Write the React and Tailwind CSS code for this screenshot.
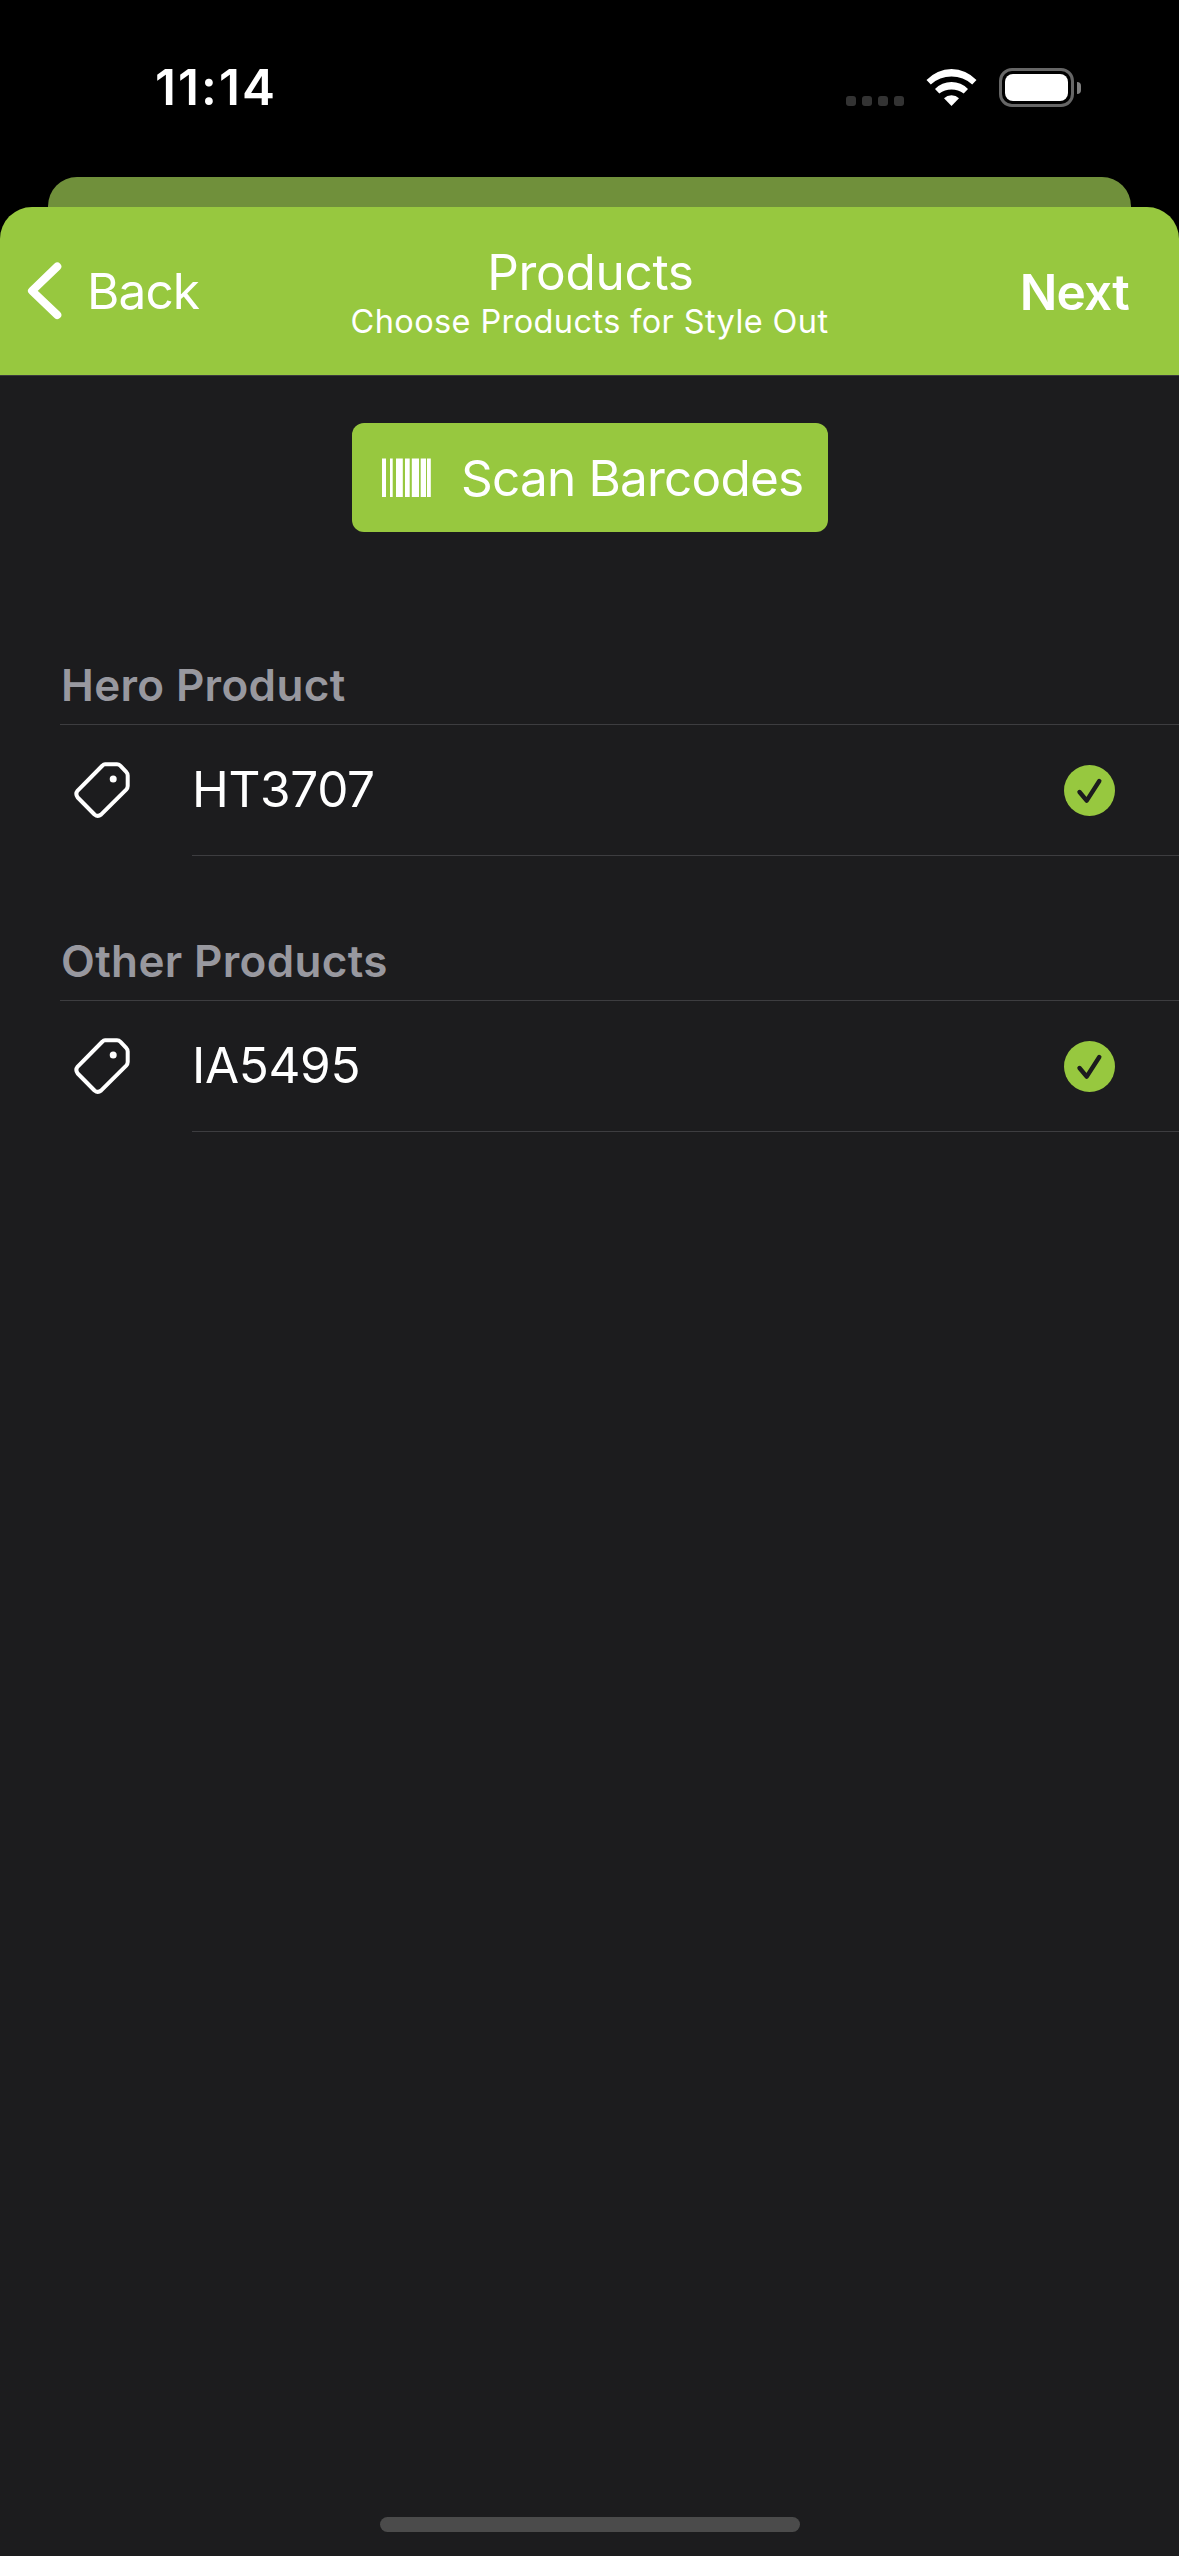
const SECTIONS = [
  { title: "Hero Product", products: ["HT3707"], spacing: "mt-[123px]" },
  { title: "Other Products", products: ["IA5495"], spacing: "mt-[75px]" },
];

// x offset and width of every bar
const BARS = [
  [0, 4],
  [8, 2.7],
  [14, 6.8],
  [23, 4.7],
  [29.8, 7.2],
  [38.7, 5.3],
  [45, 3.8],
];

function WifiIcon() {
  return (
    <svg width="51" height="37" viewBox="0 0 51 37" fill="white">
      <path d="M0.5 11 A34 34 0 0 1 50.5 11 L46.2 15.4 A30.8 30.8 0 0 0 4.8 15.4 Z" />
      <path d="M9 20 A23 23 0 0 1 42 20 L37.7 24.6 A19.8 19.8 0 0 0 13.3 24.6 Z" />
      <path d="M18 29.3 A11 11 0 0 1 33 29.3 L25.5 37 Z" />
    </svg>
  );
}

function BatteryIcon() {
  return (
    <div className="flex items-center gap-[3px]">
      <div className="h-[39px] w-[75px] rounded-[13px] border-3 border-[#666666] p-[3px]">
        <div className="h-full w-full rounded-[8px] bg-white" />
      </div>
      <div className="h-3 w-1 rounded-r-full bg-[#808080]" />
    </div>
  );
}

function StatusBar() {
  return (
    <div className="flex h-[177px] items-center justify-between pr-[98px] pb-[2px] pl-[155px]">
      <span className="text-[49.5px] font-semibold tracking-[2.1px]">11:14</span>
      <div className="flex items-center">
        <div className="mt-[27px] mr-[22px] flex gap-1.5">
          {[0, 1, 2, 3].map((dot) => (
            <span key={dot} className="size-2.5 rounded-[3px] bg-[#333333]" />
          ))}
        </div>
        <WifiIcon />
        <div className="ml-[22px]">
          <BatteryIcon />
        </div>
      </div>
    </div>
  );
}

function Header() {
  return (
    <header className="grid h-[168px] grid-cols-[1fr_auto_1fr] rounded-t-[32px] bg-[#97c83f]">
      <button className="flex items-center pl-[27px]">
        <svg width="36" height="58" viewBox="0 0 36 58" fill="none">
          <path
            d="M30.3 4.5 L5 28.8 L30.3 53"
            stroke="white"
            strokeWidth="8"
            strokeLinecap="round"
            strokeLinejoin="round"
          />
        </svg>
        <span className="ml-6 text-[49.5px] tracking-[-0.9px]">Back</span>
      </button>
      <div className="pt-[39px] text-center">
        <h1 className="pl-[2px] text-[49.5px] leading-[52px] tracking-[-0.3px]">Products</h1>
        <p className="text-[32.5px] leading-[47px] tracking-[0.39px]">Choose Products for Style Out</p>
      </div>
      <button className="flex items-center justify-end pt-0.5 pr-[50px] text-[49.5px] font-semibold tracking-[-0.75px]">
        Next
      </button>
    </header>
  );
}

function ScanButton() {
  return (
    <button className="mt-[47px] ml-[352px] flex h-[109px] w-[476px] items-center rounded-[12px] bg-[#97c83f] pl-[30px]">
      <svg width="49" height="39" viewBox="0 0 49 39" fill="white">
        {BARS.map(([x, width]) => (
          <rect key={x} x={x} y="0.5" width={width} height="38.5" />
        ))}
      </svg>
      <span className="ml-[30px] pt-px text-[49.5px] tracking-[-0.8px] whitespace-nowrap">Scan Barcodes</span>
    </button>
  );
}

function TagIcon() {
  return (
    <svg width="56" height="56" viewBox="0 0 56 56" fill="none">
      <path
        d="M31 2.3 H43 Q45 2.3 46.5 3.8 L52.2 9.8 Q53.7 11.4 53.7 13.5 V24 Q53.7 26 52.2 27.6 L27 52.6 Q23.8 55.2 20.5 52.5 L3.7 35.5 Q1 32 3.7 28.6 L28.5 3.5 Q29.6 2.3 31 2.3 Z"
        stroke="white"
        strokeWidth="4"
        strokeLinejoin="round"
      />
      <circle cx="39.2" cy="17" r="3.5" fill="white" />
    </svg>
  );
}

function CheckIcon() {
  return (
    <svg width="51" height="51" viewBox="0 0 51 51" fill="none">
      <circle cx="25.5" cy="25.5" r="25.5" fill="#97c83f" />
      <path
        d="M15.5 27 L22.7 35.6 L35.3 16"
        stroke="#1c1c1e"
        strokeWidth="4.4"
        strokeLinecap="round"
        strokeLinejoin="round"
      />
    </svg>
  );
}

function ProductRow({ name }) {
  return (
    <div className="flex">
      <div className="flex h-[130px] w-[132px] items-center pl-3.5">
        <TagIcon />
      </div>
      <div className="flex h-[131px] flex-1 items-center justify-between border-b border-[#3d3d40] pr-16">
        <span className="pb-0.5 text-[49.5px] tracking-[-0.35px]">{name}</span>
        <CheckIcon />
      </div>
    </div>
  );
}

export default function App() {
  return (
    <div className="flex h-[2556px] w-[1179px] flex-col bg-black font-['Inter',sans-serif] text-white">
      <StatusBar />

      {/* Edge of the sheet underneath */}
      <div className="mx-[48px] h-[30px] rounded-t-[29px] bg-[#70903b]" />

      <Header />

      <main className="flex flex-1 flex-col border-t border-[#3a3a3c] bg-[#1c1c1e] pb-6">
        <ScanButton />
        {SECTIONS.map((section) => (
          <section key={section.title} className={`pl-[60px] ${section.spacing}`}>
            <h2 className="mb-[9px] pl-px text-[44px] leading-[60px] font-semibold tracking-[0.34px] text-[#98989f]">
              {section.title}
            </h2>
            <div className="border-t border-[#3d3d40]">
              {section.products.map((name) => (
                <ProductRow key={name} name={name} />
              ))}
            </div>
          </section>
        ))}

        {/* Home indicator */}
        <div className="mt-auto ml-[380px] h-[15px] w-[420px] rounded-full bg-[#4b4b4b]" />
      </main>
    </div>
  );
}
